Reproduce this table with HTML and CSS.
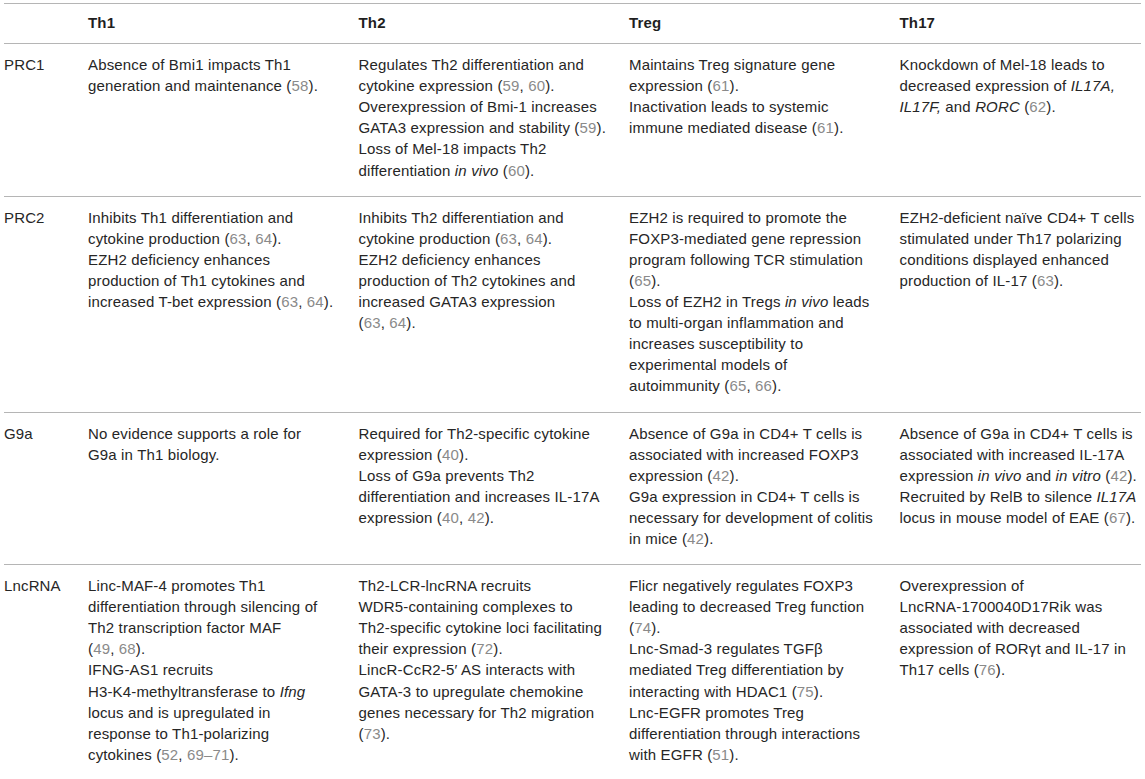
FILE: index.html
```html
<!DOCTYPE html>
<html lang="en">
<head>
  <meta charset="UTF-8">
  <title>Epigenetic regulators in T helper subsets</title>
  <link rel="stylesheet" href="styles.css">
</head>
<body>

  <table class="summary">
    <colgroup>
      <col class="col-label">
      <col class="col-subset">
      <col class="col-subset">
      <col class="col-subset">
      <col>
    </colgroup>
    <thead>
      <tr>
        <th></th>
        <th>Th1</th>
        <th>Th2</th>
        <th>Treg</th>
        <th>Th17</th>
      </tr>
    </thead>
    <tbody>
      <tr>
        <td>PRC1</td>
        <td>Absence of Bmi1 impacts Th1<br>
          generation and maintenance (<span class="ref">58</span>).</td>
        <td>Regulates Th2 differentiation and<br>
          cytokine expression (<span class="ref">59</span>, <span class="ref">60</span>).<br>
          Overexpression of Bmi-1 increases<br>
          GATA3 expression and stability (<span class="ref">59</span>).<br>
          Loss of Mel-18 impacts Th2<br>
          differentiation <i>in vivo</i> (<span class="ref">60</span>).</td>
        <td>Maintains Treg signature gene<br>
          expression (<span class="ref">61</span>).<br>
          Inactivation leads to systemic<br>
          immune mediated disease (<span class="ref">61</span>).</td>
        <td>Knockdown of Mel-18 leads to<br>
          decreased expression of <i>IL17A,</i><br>
          <i>IL17F,</i> and <i>RORC</i> (<span class="ref">62</span>).</td>
      </tr>
      <tr>
        <td>PRC2</td>
        <td>Inhibits Th1 differentiation and<br>
          cytokine production (<span class="ref">63</span>, <span class="ref">64</span>).<br>
          EZH2 deficiency enhances<br>
          production of Th1 cytokines and<br>
          increased T-bet expression (<span class="ref">63</span>, <span class="ref">64</span>).</td>
        <td>Inhibits Th2 differentiation and<br>
          cytokine production (<span class="ref">63</span>, <span class="ref">64</span>).<br>
          EZH2 deficiency enhances<br>
          production of Th2 cytokines and<br>
          increased GATA3 expression<br>
          (<span class="ref">63</span>, <span class="ref">64</span>).</td>
        <td>EZH2 is required to promote the<br>
          FOXP3-mediated gene repression<br>
          program following TCR stimulation<br>
          (<span class="ref">65</span>).<br>
          Loss of EZH2 in Tregs <i>in vivo</i> leads<br>
          to multi-organ inflammation and<br>
          increases susceptibility to<br>
          experimental models of<br>
          autoimmunity (<span class="ref">65</span>, <span class="ref">66</span>).</td>
        <td>EZH2-deficient naïve CD4+ T cells<br>
          stimulated under Th17 polarizing<br>
          conditions displayed enhanced<br>
          production of IL-17 (<span class="ref">63</span>).</td>
      </tr>
      <tr>
        <td>G9a</td>
        <td>No evidence supports a role for<br>
          G9a in Th1 biology.</td>
        <td>Required for Th2-specific cytokine<br>
          expression (<span class="ref">40</span>).<br>
          Loss of G9a prevents Th2<br>
          differentiation and increases IL-17A<br>
          expression (<span class="ref">40</span>, <span class="ref">42</span>).</td>
        <td>Absence of G9a in CD4+ T cells is<br>
          associated with increased FOXP3<br>
          expression (<span class="ref">42</span>).<br>
          G9a expression in CD4+ T cells is<br>
          necessary for development of colitis<br>
          in mice (<span class="ref">42</span>).</td>
        <td>Absence of G9a in CD4+ T cells is<br>
          associated with increased IL-17A<br>
          expression <i>in vivo</i> and <i>in vitro</i> (<span class="ref">42</span>).<br>
          Recruited by RelB to silence <i>IL17A</i><br>
          locus in mouse model of EAE (<span class="ref">67</span>).</td>
      </tr>
      <tr>
        <td>LncRNA</td>
        <td>Linc-MAF-4 promotes Th1<br>
          differentiation through silencing of<br>
          Th2 transcription factor MAF<br>
          (<span class="ref">49</span>, <span class="ref">68</span>).<br>
          IFNG-AS1 recruits<br>
          H3-K4-methyltransferase to <i>Ifng</i><br>
          locus and is upregulated in<br>
          response to Th1-polarizing<br>
          cytokines (<span class="ref">52</span>, <span class="ref">69–71</span>).</td>
        <td>Th2-LCR-lncRNA recruits<br>
          WDR5-containing complexes to<br>
          Th2-specific cytokine loci facilitating<br>
          their expression (<span class="ref">72</span>).<br>
          LincR-CcR2-5′ AS interacts with<br>
          GATA-3 to upregulate chemokine<br>
          genes necessary for Th2 migration<br>
          (<span class="ref">73</span>).</td>
        <td>Flicr negatively regulates FOXP3<br>
          leading to decreased Treg function<br>
          (<span class="ref">74</span>).<br>
          Lnc-Smad-3 regulates TGFβ<br>
          mediated Treg differentiation by<br>
          interacting with HDAC1 (<span class="ref">75</span>).<br>
          Lnc-EGFR promotes Treg<br>
          differentiation through interactions<br>
          with EGFR (<span class="ref">51</span>).</td>
        <td>Overexpression of<br>
          LncRNA-1700040D17Rik was<br>
          associated with decreased<br>
          expression of RORγt and IL-17 in<br>
          Th17 cells (<span class="ref">76</span>).</td>
      </tr>
    </tbody>
  </table>

</body>
</html>
```

FILE: styles.css
```css
body {
    margin: 0;
    background-color: #ffffff;
    font-family: "Liberation Sans", Arial, sans-serif;
    color: #262626;
  }

  .summary {
    margin: 3px 4px;
    width: 1137px;
    border-collapse: collapse;
    table-layout: fixed;
    border-top: 1px solid #b5b5b5;
    border-bottom: 1px solid #b5b5b5;
    font-size: 15px;
    line-height: 21.1px;
    letter-spacing: 0.15px;
  }

  .col-label {
    width: 84px;
  }

  .col-subset {
    width: 270.5px;
  }

  .summary th {
    text-align: left;
    font-weight: bold;
    padding: 8px 0 10px 0;
    border-bottom: 1px solid #b5b5b5;
    color: #1f1f1f;
  }

  .summary td {
    vertical-align: top;
    white-space: nowrap;
    padding: 10px 0 15px 0;
    border-bottom: 1px solid #b5b5b5;
  }

  .ref {
    color: #8a8a8a;
  }
```
